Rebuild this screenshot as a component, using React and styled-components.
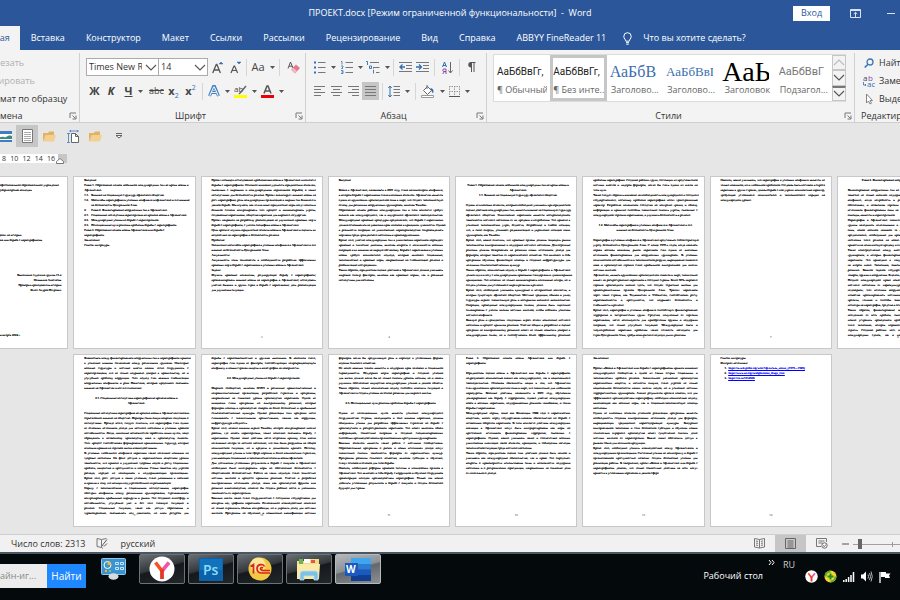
import React from 'react';
import styled, { createGlobalStyle } from 'styled-components';

const GlobalStyle = createGlobalStyle`
  * {
    box-sizing: border-box;
  }

  body {
    margin: 0;
    overflow: hidden;
    background: #04090c;
    font-family: 'Open Sans', 'Noto Sans', sans-serif;
    font-size: 9px;
    line-height: 12px;
    color: #333;
  }

  button,
  input,
  select {
    margin: 0;
    padding: 0;
    border: 0;
    background: none;
    font: inherit;
    color: inherit;
  }

  svg {
    display: block;
    flex: none;
  }
`;

const Screen = styled.div`
  display: flex;
  flex-direction: column;
  height: 100vh;
  overflow: hidden;
`;

/* ---------- title and tabs ---------- */

const TitleBar = styled.header`
  display: grid;
  grid-template-columns: 1fr auto 1fr;
  align-items: center;
  height: 26px;
  flex: none;
  background: #2b579a;
  color: #fff;
`;

const WindowTitle = styled.h1`
  grid-column: 2;
  margin: 0;
  font-size: 9px;
  font-weight: 400;
  white-space: pre;
`;

const WindowTools = styled.div`
  display: flex;
  justify-content: flex-end;
  align-items: center;
  gap: 20px;
  padding-right: 5px;

  svg + svg {
    margin-left: 6px;
  }
`;

const SignIn = styled.button`
  width: 37px;
  height: 15px;
  background: #fff;
  color: #2b579a;
`;

const Tabs = styled.nav`
  display: flex;
  align-items: stretch;
  height: 24px;
  flex: none;
  overflow: hidden;
  background: #2b579a;
`;

const Tab = styled.button`
  flex: none;
  padding: 0 10px 0 11px;
  color: #fff;
  white-space: nowrap;

  &.active {
    margin-left: -37px;
    background: #f3f3f3;
    color: #2b579a;
  }
`;

const TellMe = styled.button`
  display: flex;
  align-items: center;
  gap: 11px;
  flex: 1;
  padding-left: 7px;
  color: #fff;
  white-space: nowrap;
`;

/* ---------- ribbon ---------- */

const Ribbon = styled.section`
  display: flex;
  height: 73px;
  flex: none;
  margin-left: -60px;
  background: #f3f3f3;
  border-bottom: 1px solid #cfcfcf;
`;

const Group = styled.div`
  display: flex;
  flex-direction: column;
  flex: ${({ $width }) => ($width ? `0 0 ${$width}px` : '1 1 0')};
  min-width: 0;
  margin-top: 3px;
  padding: ${({ $pad }) => $pad || '0 6px'};
  border-right: 1px solid ${({ $last }) => ($last ? 'transparent' : '#d0d0d0')};
`;

const GroupFooter = styled.div`
  display: flex;
  align-items: center;
  height: 12px;
  margin-top: auto;
  white-space: nowrap;

  span {
    flex: 1;
    text-align: ${({ $align }) => $align || 'center'};
  }
`;

const ToolRow = styled.div`
  display: flex;
  align-items: center;
  height: 20px;
  margin-top: 4px;
`;

const Tool = styled.button`
  display: flex;
  align-items: center;
  justify-content: center;
  gap: 5px;
  flex: none;
  width: ${({ $width }) => $width || 17}px;
  height: 18px;
  background: ${({ $active }) => ($active ? '#c6c6c6' : 'transparent')};
  font-size: 11px;
  color: #444;

  s {
    font-size: 9px;
  }

  sub,
  sup {
    font-size: 7px;
    line-height: 0;
    color: #2f6fb5;
  }
`;

const Separator = styled.i`
  flex: none;
  width: 1px;
  height: 17px;
  margin: 0 3px;
  background: #d6d6d6;
`;

const Combo = styled.label`
  position: relative;
  flex: none;
  width: ${({ $width }) => $width}px;
  height: 18px;
  margin-right: -1px;

  select {
    width: 100%;
    height: 100%;
    padding: 0 16px 0 2px;
    border: 1px solid #ababab;
    border-radius: 0;
    background: #fff;
    appearance: none;
    font-size: 9px;
    text-overflow: clip;
  }

  svg {
    position: absolute;
    right: 2px;
    top: 6px;
  }
`;

const CommandList = styled.div`
  display: flex;
  flex-direction: column;
  align-items: flex-start;
  padding: 1px 0 0 ${({ $inset }) => $inset || 0}px;
`;

const Command = styled.button`
  display: flex;
  align-items: center;
  gap: 4px;
  height: 18px;
  white-space: nowrap;
  color: ${({ $muted }) => ($muted ? '#b1b1b1' : '#333')};

  svg {
    width: 12px;
  }
`;

const Gallery = styled.div`
  display: flex;
  height: 48px;
  margin: 1px 6px 0 0;
  border: 1px solid #dcdcdc;
  background: #fff;
`;

const StyleItem = styled.button`
  display: flex;
  flex-direction: column;
  flex: 1 1 0;
  min-width: 0;
  height: 100%;
  border: 3px solid ${({ $active }) => ($active ? '#c6c6c6' : 'transparent')};
  white-space: nowrap;
  overflow: hidden;
`;

const StyleSample = styled.span`
  display: block;
  width: 47px;
  height: 26px;
  overflow: hidden;
  line-height: 28px;
  text-align: left;
  font-family: ${({ $serif }) => ($serif ? "'Liberation Serif', serif" : 'Roboto, sans-serif')};
  font-size: ${({ $size }) => $size || 10}px;
  color: ${({ $color }) => $color || '#222'};
`;

const StyleName = styled.span`
  display: block;
  color: #666;
`;

const GalleryScroll = styled.div`
  display: grid;
  grid-template-rows: repeat(3, 1fr);
  width: 13px;
  flex: none;

  button {
    display: grid;
    place-items: center;
    border: 1px solid #c6c6c6;
    background: #f3f3f3;
  }

  button:last-child {
    border-top: 2px solid #777;
  }
`;

/* ---------- quick access and ruler ---------- */

const Workspace = styled.main`
  flex: 1;
  min-height: 0;
  overflow: hidden;
  background: #e6e6e6;
`;

const QuickAccess = styled.div`
  display: flex;
  align-items: center;
  height: 26px;
  margin-left: -6px;
`;

const QuickButton = styled.button`
  display: grid;
  place-items: center;
  width: 22px;
  height: 22px;
  background: ${({ $active }) => ($active ? '#c6c6c6' : 'transparent')};

  & + & + & {
    width: 23px;
  }
`;

const Ruler = styled.div`
  position: relative;
  display: flex;
  width: 67px;
  height: 9px;
  margin: 5px 0 13px;
  padding-right: 12px;
  background: linear-gradient(90deg, #fff 58px, #c6c6c6 58px);
  font-size: 7px;
  line-height: 9px;

  span {
    flex: 1;
    text-align: right;
  }

  span:first-child {
    flex: none;
    width: 6px;
  }

  svg {
    position: absolute;
    right: 3px;
    top: 4px;
  }
`;

/* ---------- pages ---------- */

const Pages = styled.div`
  display: grid;
  grid-template-columns: repeat(8, 1fr);
  grid-auto-rows: 173px;
  gap: 5px;
  margin: 0 -59px 0 -54px;
`;

const Sheet = styled.article`
  position: relative;
  padding: 1px 6px 0 10px;
  border: 1px solid #c8c8c8;
  background: #fff;
  overflow: hidden;
  font-family: 'Liberation Serif', serif;
  font-size: 3px;
  line-height: 5px;
  color: #000;
  text-rendering: geometricPrecision;
  text-shadow: 0 0 0 #000, 0 0 0 #000;

  &:nth-child(9) {
    grid-column-start: 2;
  }
`;

const PageNumber = styled.footer`
  position: absolute;
  left: 0;
  right: 0;
  bottom: 8px;
  text-align: center;
  text-shadow: none;
`;

const Paragraph = styled.p`
  margin: 0;
  text-align: ${({ $align }) => $align || 'justify'};
`;

const Line = styled.span`
  display: block;
  white-space: nowrap;
  text-align-last: ${({ $fill }) => ($fill ? 'justify' : 'inherit')};
`;

const Gap = styled.div`
  height: ${({ $lines }) => ($lines || 1) * 5}px;
`;

const Contents = styled.ol`
  margin: 0;
  padding: 0;
  list-style: none;

  li {
    display: grid;
    grid-template-columns: 7px 1fr;
    white-space: pre;
  }
`;

const Sources = styled(Contents)`
  padding-left: 4px;

  li {
    grid-template-columns: 4px 1fr;
  }

  a {
    justify-self: start;
    color: #00f;
    text-decoration: underline;
    text-shadow: 0 0 0 #00f, 0 0 0 #00f;
  }
`;

/* ---------- status bar ---------- */

const StatusBar = styled.footer`
  display: flex;
  align-items: center;
  height: 18px;
  flex: none;
  overflow: hidden;
  padding-left: 11px;
  border-top: 1px solid #cfcfcf;
  background: #f1f1f1;
  white-space: nowrap;
`;

const Language = styled.button`
  display: flex;
  align-items: center;
  gap: 13px;
  margin-left: 10px;
`;

const ViewButton = styled.button`
  display: grid;
  place-items: center;
  width: 31px;
  height: 17px;
  background: ${({ $active }) => ($active ? '#c6c6c6' : 'transparent')};
`;

const Spacer = styled.span`
  flex: 1;
`;

const ZoomSlider = styled.input`
  flex: none;
  width: 78px;
  height: 12px;
  margin: 0 -31px 0 4px;
  appearance: none;
  background:
    linear-gradient(#999, #999) 39px 4px / 1px 5px no-repeat,
    linear-gradient(#a0a0a0, #a0a0a0) 0 6px / 100% 1px no-repeat;

  &::-webkit-slider-thumb {
    appearance: none;
    width: 4px;
    height: 10px;
    background: #666;
  }
`;

/* ---------- taskbar ---------- */

const Taskbar = styled.footer`
  display: flex;
  align-items: flex-start;
  height: 48px;
  flex: none;
  border-top: 2px solid #4a5662;
  background: #04090c;
  color: #fff;
`;

const SearchBox = styled.form`
  display: flex;
  width: 86px;
  height: 24px;
  flex: none;
  margin-top: 10px;

  input {
    flex: 1;
    min-width: 0;
    background: #ececec;
    color: #888;
    font-size: 9px;
  }

  button {
    width: 39px;
    background: #1f87ff;
    color: #fff;
    font-size: 10px;
  }
`;

const Gadget = styled.button`
  margin: 4px 13px 0 15px;
`;

const TaskList = styled.div`
  display: flex;
  gap: 3px;
`;

const TaskButton = styled.button`
  display: grid;
  place-items: center;
  width: 46px;
  height: 30px;
  border: 1px solid ${({ $active }) => ($active ? '#b5babd' : '#6c7276')};
  border-radius: 2px;
  background: ${({ $active }) =>
    $active
      ? 'linear-gradient(165deg, #b4b8bb 0%, #8c9195 45%, #63686c 50%, #8d9194 100%)'
      : 'linear-gradient(165deg, #6a6f73 0%, #33383c 45%, #15191c 50%, #22272a 100%)'};
`;

const Desktop = styled.div`
  margin: 15px 5px 0 0;
  line-height: 14px;
`;

const Tray = styled.div`
  display: grid;
  grid-template-rows: 15px 9px;
  align-items: center;
  padding: 3px 9px 0 0;
`;

const TrayIcons = styled.div`
  display: flex;
  align-items: center;
  gap: 6px;
  padding-left: 37px;
`;

const TrayLanguage = styled.div`
  display: flex;
  align-items: flex-start;
  gap: 8px;
  color: #ccc;

  svg {
    margin-top: 1px;
  }
`;

/* ---------- icons ---------- */

const Svg = ({ w, h, children, ...rest }) => (
  <svg width={w} height={h} viewBox={`0 0 ${w} ${h}`} fill="none" aria-hidden="true" {...rest}>
    {children}
  </svg>
);

const Caret = () => (
  <Svg w={5} h={3}>
    <path d="M0 0h5L2.5 3z" fill="#555" />
  </Svg>
);

const Chevron = ({ up, muted }) => (
  <Svg w={12} h={7}>
    <path d={up ? 'M1 6l5-5 5 5' : 'M1 1l5 5 5-5'} stroke={muted ? '#bbb' : '#555'} strokeWidth="1.1" />
  </Svg>
);

const Launcher = () => (
  <Svg w={8} h={8}>
    <path d="M1 6V1h6M3.5 3.5l3 3M7 3.5V7H3.5" stroke="#777" />
  </Svg>
);

const FontSizeIcon = ({ up }) => (
  <Svg w={11} h={13}>
    {up ? (
      <path d="M.7 12L4.3 3.5h.6L8.4 12M2 9h5" stroke="#555" strokeWidth="1.3" />
    ) : (
      <path d="M1 12l3-7h.6l3 7M2 9.5h4.500" stroke="#555" strokeWidth="1.2" />
    )}
    <path d={up ? 'M7 3l2-2 2 2z' : 'M7 1h4L9 3z'} fill="#2f6fb5" stroke="#2f6fb5" strokeWidth=".5" />
  </Svg>
);

const EraserIcon = () => (
  <Svg w={13} h={13}>
    <path d="M4 8.5L9 3.500l4 3.500L8 12.500z" fill="#e6798c" />
    <path d="M4 8.500L6 6.500l4 3.800-2 2.200z" fill="#f3b9c3" />
    <path d="M1 7.500L3.500 1 6 7M2 5.200h3" stroke="#555" />
  </Svg>
);

const OutlineA = () => (
  <Svg w={12} h={12}>
    <path d="M1.5 11L5.500 1.500h1l4 9.500M3.500 7.500h5" stroke="#3f7cc0" strokeWidth="3" />
    <path d="M1.7 10.700L5.700 2h.6l4 8.700M3.500 7.500h5" stroke="#e8f1fa" strokeWidth="1.1" />
  </Svg>
);

const HighlightIcon = () => (
  <Svg w={13} h={13}>
    <text x="0" y="7" fontSize="8" fontFamily="Open Sans" fill="#444">ab</text>
    <path d="M12 1L6.500 7.500 5 9" stroke="#666" strokeWidth="1.5" />
    <path d="M0 10h13v3H0z" fill="#ff0" />
  </Svg>
);

const FontColorIcon = () => (
  <Svg w={13} h={13}>
    <path d="M3 8.500L6 1h1l3 7.500M4 6h5" stroke="#555" strokeWidth="1.5" />
    <path d="M0 10h13v3H0z" fill="#e00" />
  </Svg>
);

const ListIcon = ({ kind }) => (
  <Svg w={kind === 'multi' ? 14 : 12} h={13}>
    {kind === 'bullets' && (
      <>
        <path d="M4 1.5h7.500M4 6.500h7.500M4 11.500h7.500" stroke="#777" />
        <path d="M0 .5h2v2H0zM0 5.500h2v2H0zM0 10.500h2v2H0z" fill="#2f6fb5" />
      </>
    )}
    {kind === 'numbers' && (
      <>
        <path d="M4.5 1.500H12M4.500 6.500H12M4.500 11.500H12" stroke="#777" />
        <path d="M0 .5h1v3M0 5h2v1L.5 7.500H2M0 9.500h2v3H0M.5 11H2" stroke="#2f6fb5" strokeWidth=".8" />
      </>
    )}
    {kind === 'multi' && (
      <>
        <path d="M4 1.500h9M7 6.500h6.500M10 11.500h3.500" stroke="#777" />
        <path d="M0 .5h1.500V4M3.500 5h2v2.500h-2zM7.500 9v3.500M7.500 7.500v.8" stroke="#2f6fb5" strokeWidth=".9" />
      </>
    )}
  </Svg>
);

const IndentIcon = ({ out }) => (
  <Svg w={13} h={12}>
    <path d="M0 1.500h13M7 4.500h6M7 7.500h6M0 10.500h13" stroke="#777" />
    <path d={out ? 'M6 6H1M3.500 3.500L1 6l2.500 2.500' : 'M0 6h5M3 3.500L5.500 6 3 8.500'} stroke="#2f6fb5" strokeWidth="1.3" />
  </Svg>
);

const SortIcon = () => (
  <Svg w={11} h={13}>
    <path d="M.5 6L2.500 1l2 5M1 4.500h3" stroke="#2f6fb5" />
    <path d="M4 13V8H2a1.200 1.200 0 000 2.500h2M2.500 10.500L.7 13" stroke="#8a4aa8" />
    <path d="M8.500 1v11M6.500 9.500l2 2.500 2-2.500" stroke="#666" />
  </Svg>
);

const PilcrowIcon = () => (
  <Svg w={9} h={12}>
    <path d="M4 6.500a2.700 2.700 0 010-5.500z" fill="#555" />
    <path d="M4.500 11V1.500M7 11V1.500M3 1.500h5.500" stroke="#555" />
  </Svg>
);

const ALIGN_PATHS = {
  left: 'M0 .5h11M0 3.500h7M0 6.500h11M0 9.500h7',
  center: 'M0 .5h11M2 3.500h7M0 6.500h11M2 9.500h7',
  right: 'M0 .5h11M4 3.500h7M0 6.500h11M4 9.500h7',
  justify: 'M0 .5h11M0 3.500h11M0 6.500h11M0 9.500h11',
};

const AlignIcon = ({ kind }) => (
  <Svg w={11} h={10}>
    <path d={ALIGN_PATHS[kind]} stroke="#777" />
  </Svg>
);

const LineSpacingIcon = () => (
  <Svg w={12} h={13}>
    <path d="M5.500 1.500H12M5.500 4.500H12M5.500 7.500H12M5.500 10.500H12" stroke="#777" />
    <path d="M2 1v11M.3 3L2 1l1.700 2M.3 10L2 12l1.700-2" stroke="#2f6fb5" />
  </Svg>
);

const BucketIcon = () => (
  <Svg w={14} h={13}>
    <path d="M2.500 5.500L6.500 1.500l4 4-4 4z" stroke="#666" fill="#fff" />
    <path d="M6 0v4" stroke="#666" />
    <path d="M9.500 3c3 .5 3.500 3 2.500 5.500C11 7 10.500 6 10 5z" fill="#2f6fb5" />
    <path d="M.5 10.500h12v2H.5z" fill="#fff" stroke="#999" />
  </Svg>
);

const BordersIcon = () => (
  <Svg w={11} h={11}>
    <path d="M.5 0v10M5.500 0v10M10.500 0v10M0 .5h11M0 5.500h11" stroke="#999" strokeDasharray="1.5 1" />
    <path d="M0 10.500h11" stroke="#555" />
  </Svg>
);

const SearchIcon = () => (
  <Svg w={12} h={10}>
    <circle cx="7" cy="4" r="3" stroke="#3a75b8" strokeWidth="1.3" />
    <path d="M5 6.200L1.700 9.500" stroke="#3a75b8" strokeWidth="1.6" />
  </Svg>
);

const ReplaceIcon = () => (
  <Svg w={12} h={14}>
    <text x="0" y="7" fontSize="8" fontFamily="Open Sans" fill="#444">a</text>
    <text x="5" y="7" fontSize="8" fontFamily="Open Sans" fill="#8a4aa8">b</text>
    <text x="4" y="13" fontSize="8" fontFamily="Open Sans" fill="#2f6fb5">ac</text>
    <path d="M.5 8v3H3M2 10l1 1-1 1" stroke="#2f6fb5" strokeWidth=".8" />
  </Svg>
);

const PointerIcon = () => (
  <Svg w={12} h={12}>
    <path d="M3.500 1v9l2-2 1.500 3 1.500-.8L7 7.500h2.500z" fill="#fff" stroke="#777" strokeWidth=".9" />
  </Svg>
);

const BulbIcon = () => (
  <Svg w={9} h={13}>
    <path d="M2.800 9.200C2.800 7.500.8 6.800.8 4.400a3.700 3.700 0 017.400 0c0 2.400-2 3.100-2 4.800zM3 10.700h3M3.300 12.200h2.400" stroke="#fff" />
  </Svg>
);

const RibbonIcon = () => (
  <Svg w={11} h={9}>
    <path d="M.5.5h10v8H.5zM.5 1.500h10M5.500 8V3.500M3.700 5l1.800-1.700L7.300 5" stroke="#dbe4f1" />
  </Svg>
);

const PictureIcon = () => (
  <Svg w={13} h={11}>
    <path d="M0 0h13v11H0z" fill="#fff" />
    <path d="M0 0h13v3H0z" fill="#3f7cc0" />
    <path d="M0 7c4-3 5 0 7-1s3-2 6-1v3H0z" fill="#3a8a82" />
    <path d="M0 9h13v2H0z" fill="#3f7cc0" />
  </Svg>
);

const DocumentIcon = () => (
  <Svg w={11} h={14}>
    <path d="M.5.5h10v13H.5z" fill="#fff" stroke="#777" />
    <path d="M2 3.500h7M2 5.500h7M2 7.500h7M2 9.500h7M2 11.500h7" stroke="#aaa" />
  </Svg>
);

const FolderIcon = () => (
  <Svg w={13} h={11}>
    <path d="M0 10V2h5l1-1.500h5V10z" fill="#e2b263" />
    <path d="M0 10.500L2.500 4H13l-2 6.500z" fill="#f3cf92" />
  </Svg>
);

const PageSizeIcon = () => (
  <Svg w={12} h={13}>
    <path d="M1.500 3.500v9M0 3.500h3M0 12.500h3M3 1h8M4 0L2.500 1 4 2M10 0l1.500 1L10 2" stroke="#3f7cc0" strokeWidth=".8" />
    <path d="M4.500 3.500h4l3 3v6h-7zM8.500 3.500v3h3" fill="#fff" stroke="#666" />
  </Svg>
);

const CustomizeIcon = () => (
  <Svg w={8} h={6}>
    <path d="M1 .5h6M1 2.500h6L4 5z" stroke="#555" fill="#fff" strokeWidth=".9" />
  </Svg>
);

const RulerMarker = () => (
  <Svg w={8} h={6}>
    <path d="M.5 5.500v-2L4 .5l3.500 3v2z" fill="#fff" stroke="#777" />
  </Svg>
);

const ProofIcon = () => (
  <Svg w={12} h={11}>
    <path d="M5.500 9.500V1.500L1 .5v8zM5.500 9.500l1.500 1M5.500 1.500L10.500.5" stroke="#777" />
    <path d="M11 1.500L7 6.500l-.5 1.500M8 8.500l3-3" stroke="#555" />
  </Svg>
);

const ReadIcon = () => (
  <Svg w={11} h={11}>
    <path d="M5.500 1.500v8.500M.5.5l5 1 5-1v8.500l-5 1-5-1zM2 3l2 .4M2 5l2 .4M2 7l2 .4M9 3l-2 .4M9 5l-2 .4M9 7l-2 .4" stroke="#777" />
  </Svg>
);

const PrintIcon = () => (
  <Svg w={11} h={11}>
    <path d="M.5.5h10v10H.5zM2.500 3h6M2.500 5h6M2.500 7h6M2.500 9h6" stroke="#666" />
  </Svg>
);

const WebIcon = () => (
  <Svg w={12} h={11}>
    <path d="M10.500 4V.5H.5v8H5M2.500 3h6M2.500 5h4" stroke="#777" />
    <circle cx="8.500" cy="7.500" r="2.700" fill="#fff" stroke="#666" />
    <path d="M7 7.500l1.500 1 1.500-2" stroke="#666" />
  </Svg>
);

const ControlPanelIcon = () => (
  <Svg w={25} h={22}>
    <rect x=".5" y=".5" width="24" height="16" rx="1" fill="#3a94d0" stroke="#8fc8ec" />
    <circle cx="6.500" cy="7" r="3.500" stroke="#fff" />
    <path d="M6.500 3.500V7H10a3.500 3.500 0 00-3.500-3.500z" fill="#f6b32b" />
    <path d="M14.500 4.500h3v2h-3zM19.500 4.500h3v2h-3zM14.500 9.500h3v2h-3zM19.500 9.500h3v2h-3z" stroke="#c8e6f8" />
    <path d="M4 13h2" stroke="#f6b32b" strokeWidth="2" />
    <path d="M8 13h2" stroke="#6fd06b" strokeWidth="2" />
    <ellipse cx="12.500" cy="18.500" rx="5" ry="3.200" fill="#d7dcdf" />
  </Svg>
);

const YandexIcon = ({ size = 26 }) => (
  <svg width={size} height={size} viewBox="0 0 26 26" fill="none" aria-hidden="true">
    <circle cx="13" cy="13" r="12.500" fill="#fff" />
    <path d="M20 6.500l-7 8.500" stroke="#ee55a8" strokeWidth="3.600" />
    <path d="M6.500 6.500L13 15" stroke="#f9501f" strokeWidth="3.600" />
    <path d="M13 13.500v9.500" stroke="#e33a23" strokeWidth="3.800" />
  </svg>
);

const PhotoshopIcon = () => (
  <Svg w={24} h={23}>
    <path d="M0 0h24v23H0z" fill="#0b62a8" />
    <path d="M1 1h22v11H1z" fill="#1272bc" />
    <text x="4" y="17" fontSize="14" fontWeight="600" fontFamily="Open Sans" fill="#8fdcfb">Ps</text>
  </Svg>
);

const OneCIcon = () => (
  <Svg w={24} h={24}>
    <circle cx="12" cy="12" r="11.500" fill="#f3c845" />
    <circle cx="10" cy="8" r="7.500" fill="#fbe79a" />
    <path d="M2.500 9.500L5.500 7.500v9M16.500 9.500c-1-3-7.500-2.500-7.500 2s3 4.500 5 4.500h8M15 11c-2.500-1.500-4 2 0 2.500h7" stroke="#d8261c" strokeWidth="1.700" />
  </Svg>
);

const ExplorerIcon = () => (
  <Svg w={26} h={24}>
    <path d="M1 22V4h7l1-2h14v20z" fill="#f3dc86" />
    <path d="M3 2h4v5H3z" fill="#6cb355" />
    <path d="M8 2h6v4H8z" fill="#fff" />
    <path d="M15 3h4v3h-4z" fill="#e2574c" />
    <path d="M1 7h23l-1 15H1z" fill="#f9eaa8" />
    <path d="M4 23v-6q0-3 3-3h12q3 0 3 3v6h-4v-4H8v4z" fill="#7fc0e4" stroke="#b9e2f5" strokeWidth=".8" />
  </Svg>
);

const WordIcon = () => (
  <Svg w={26} h={23}>
    <path d="M6 0h20v6H6z" fill="#41a5ee" />
    <path d="M6 6h20v5.500H6z" fill="#2b7cd3" />
    <path d="M6 11.500h20V17H6z" fill="#185abd" />
    <path d="M6 17h20v6H6z" fill="#103f91" />
    <path d="M0 5h13v13H0z" fill="#185abd" />
    <text x="1" y="15" fontSize="10" fontWeight="700" fontFamily="Open Sans" fill="#fff">W</text>
  </Svg>
);

const AntivirusIcon = () => (
  <Svg w={13} h={13}>
    <circle cx="6.500" cy="6.500" r="6" fill="#f2d42c" />
    <path d="M6.500.5a6 6 0 00-6 6h2a4 4 0 014-4zM6.500 12.500a6 6 0 006-6h-2a4 4 0 01-4 4z" fill="#5aa832" />
    <path d="M6.500 3.500v6M3.500 6.500h6" stroke="#1e8b2a" strokeWidth="2" />
  </Svg>
);

const SignalIcon = () => (
  <Svg w={12} h={10}>
    <path d="M.8 8v2M3.200 7v3M5.600 5v5M8 3v7M10.500 0v10" stroke="#fff" strokeWidth="1.500" />
  </Svg>
);

const VolumeIcon = () => (
  <Svg w={12} h={11}>
    <path d="M0 3.500h2L5 .5v10l-3-3H0z" fill="#fff" />
    <path d="M7 3.500q1 2 0 4M8.500 2q2 3.500 0 7M10 .5q2.500 5 0 10" stroke="#ccc" strokeWidth=".9" />
  </Svg>
);

const FlagIcon = () => (
  <Svg w={12} h={12}>
    <path d="M1 1v11" stroke="#fff" strokeWidth="1.300" />
    <path d="M2 1h5v1.500h4.500L10 4.500l1 2.500H6V6H2z" fill="#fff" />
  </Svg>
);

const MoreIcon = () => (
  <Svg w={7} h={5}>
    <path d="M1 0l2 2.500L1 5M4 0l2 2.500L4 5" stroke="#fff" />
  </Svg>
);

/* ---------- document text ---------- */

// every row of the string is one line; all but the last one fill the column
const Text = ({ children, align, open }) => {
  const lines = children.split('\n');
  return (
    <Paragraph $align={align}>
      {lines.map((line, index) => (
        <Line key={index} $fill={!align && (open || index < lines.length - 1)}>
          {line}
        </Line>
      ))}
    </Paragraph>
  );
};

const sheets = [
  <>
    <Gap />
    <Text align="center">{`Государственное бюджетное профессиональное образовательное учреждение
область «Губернаторский колледж»`}</Text>
    <Gap $lines={8} />
    <Text align="center">{`Проект по истории
«Война Афганистана или борьба с наркотрафиком»`}</Text>
    <Gap $lines={6} />
    <Text align="right">{`Выполнила студентка группы 11-а
Немыкина Анастасия
Проверил преподаватель истории
Белоз Андрей Петрович`}</Text>
    <Gap $lines={8} />
    <Text align="center">Пятигорск 2024 г.</Text>
  </>,
  <>
    <Text>Введение</Text>
    <Text>{`Глава 1. Образование полков мобильной международных сил во время войны в
Афганистане.`}</Text>
    <Contents>
      <li><span>1.1.</span>Влияние на социальную структуру афганского общества.</li>
      <li><span>1.2.</span>{'Масштабы наркотрафика в условиях конфликта в афганистане и его влияние\nна безопасность Центральной Азии.'}</li>
      <li><span>2.</span>Глава 2. Финансирование вооруженных сил в Афганистане.</li>
      <li><span>2.1.</span>Социальные последствия наркоторговли во времена войны в Афганистане.</li>
      <li><span>2.2.</span>Международные усилия по борьбе с наркоторговлей.</li>
      <li><span>2.3.</span>Потенциальные пути решения проблемы борьбы с наркотрафиком.</li>
    </Contents>
    <Text align="left">{`Глава 3. Образование полков войны Афганистана или борьба с
наркотрафиком.
Заключение
Список литературы`}</Text>
  </>,
  <>
    <Text>{`Проект посвящен исследованию проблематики войны в Афганистане в контексте
борьбы с наркотрафиком. Основное внимание уделяется юридическим аспектам,
связанным с мировыми и международными нормативной борьбой, а также
последствиям для безопасности региона. Проект анализирует влияние войны на
рост наркотрафика, роль международных организаций и мирных сил Ближнего в
данной борьбе. Мы изучаем, как те или иные юридические меры могут помочь в
большей степени контролировать этот процесс и минимизировать угрозы,
создаваемые наркотиками, общества наркотика для мирового государства.`}</Text>
    <Text>{`Проект направлен на разработку рекомендаций по улучшению правовых мер в
борьбе с наркотрафиком, с учетом специфики войны в Афганистане.`}</Text>
    <Text>{`Цель проекта: изучить юридические аспекты войны в Афганистане и оценить их
воздействие на наркотрафик и безопасность региона.`}</Text>
    <Text>Проблема:</Text>
    <Text>{`Увеличение масштабов наркотрафика в условиях конфликта в Афганистане и его
влияние на безопасность Центральной Азии.`}</Text>
    <Text>Актуальность:</Text>
    <Text>{`Актуальность темы заключается в необходимости разработки эффективных
правовых мер в борьбе с наркотиками в условиях войны в Афганистане.`}</Text>
    <Text>Задачи:</Text>
    <Text>{`Изучить правовые механизмы, регулирующие борьбу с наркотрафиком;
проанализировать влияние войны на наркотрафик в Афганистане; исследовать
участие бывших и других стран в борьбе с наркотиками; дать рекомендации
для улучшения ситуации.`}</Text>
  </>,
  <>
    <Text>Введение</Text>
    <Gap />
    <Text>{`Война в Афганистане, начавшаяся в 2001 году, стала катализатором конфликта,
в котором борьба с наркотиками стала ключевым аспектом. Афганистан является
одним из крупнейших производителей опия в мире, что создает экономическую
основу для различных вооруженных группировок, включая Талибан.`}</Text>
    <Text>{`Образование полков рабочих международных сил в этом контексте требует
анализа как международного, так и внутреннего афганского законодательства.
Международные правовые процедуры предполагают, что борьба с наркотиками
должна основываться на уважении прав человека и принципах гуманности. Однако
в реальности операции по уничтожению наркопроизводства сопровождались
жертвами среди гражданского населения и правонарушениями.`}</Text>
    <Text>{`Кроме того, участие международных сил в уничтожении наркотиков порождает
правовые и этические дилеммы, включая вопросы о легитимности военных
операций и их влиянии на мирную обстановку. Борьба с наркотиками в условиях
войны требует комплексного подхода, который включает социальные,
экономические и правовые меры, направленные на стабилизацию региона и
реабилитацию пострадавших.`}</Text>
    <Text>{`Таким образом, юридическая оценка действий в Афганистане должна учитывать
широкий спектр факторов, включая как правовые нормы, так и реальные
последствия для населения.`}</Text>
  </>,
  <>
    <Gap />
    <Text align="center">{`Глава 1. Образование полков мобильной международных сил во время войны в
Афганистане.
1.1. Влияние на социальную структуру афганского общества.`}</Text>
    <Gap />
    <Text>{`Одним из ключевых аспектов, который необходимо учитывать при юридической
оценке действий международных сил, является влияние на социальную структуру
афганского общества. Уничтожение наркотиков является воспроизведением
зависимости местного населения от их продажи и потребления. Это привело к
усилению экономических утрат, бедности, безработице и слабой позиции,
что, в свою очередь, усиливает радикализацию и укрепление позиций таких
группировок, как Талибан.`}</Text>
    <Text>{`Кроме того, важно отметить, что правовые органы должны защищать рынки
экономически альтернативные и поддержке местного населения. Долгосрочные
решения должны базироваться на развитии новых источников дохода для
фермеров, которые зависели от наркотического хозяйства. Это включает в себя
программы обучения, финансовую помощь и создание инфраструктуры для
легальных сельскохозяйственных культур.`}</Text>
    <Text>{`Таким образом, комплексный подход к борьбе с наркотрафиком в Афганистане
должен идти в ногу с международными правовыми стандартами и гуманитарными
принципами. Это позволит не только минимизировать негативные потери, но и
создать условия для устойчивого мира и развития в регионе.`}</Text>
    <Text>{`Кроме того, необходимо учитывать культурные и исторические контексты, в
которых существует афганское общество. Местные традиции, обычаи и уклад
структуры играют значительную роль в восприятии внешнего вмешательства.
Операции, проводимые международными силами, должны быть тщательно
спланированы с учетом мнения местных жителей, чтобы избежать усиления
местного конфликта.`}</Text>
    <Text open>{`Важную роль в гражданских тенденциях играет аспект вовлечение местного
населения в процесс принятия решений. Участие общин в разработке и оценке
программ по альтернативному развитию может не только повысить доверие к
международным силам, но и способствовать более эффективному решению`}</Text>
  </>,
  <>
    <Text>{`проблемы наркотрафика. Создание рабочих групп, состоящих из представителей
местных властей и лидеров фермеров, могло бы стать одним из шагов на
этом пути.`}</Text>
    <Text>{`Также следует обратить внимание на необходимость международного и соседнего
государственного, поскольку проблема наркотрафика носит трансграничный
характер. Разработка механизмов соседства по контролю границ и обмену
информации и принятие способны значительно снизить угрозы, связанные с
международной торговли наркотиками, и улучшить безопасность в регионе.`}</Text>
    <Gap />
    <Text align="center">{`1.2. Масштабы наркотрафика в условиях конфликта в Афганистане и его
влияние на безопасность Центральной Азии.`}</Text>
    <Gap />
    <Text>{`Наркотрафик в условиях конфликта в Афганистане представляет собой серьезную
угрозу безопасности Центральной Азии. С конца 1970-х годов, когда началась
первая военная кампания, рынок наркотиков стал одним из ключевых
источников финансирования для вооруженных группировок. В условиях
политической нестабильности и экономической разрухи, выращивание опийного
мака и производство героина стало прибыльной альтернативой для многих
местных жителей.`}</Text>
    <Text>{`Афганистан, являясь крупнейшим производителем опиатов в мире, значительно
влияет на распространение наркотиков в соседние страны. Более 90% мирового
героина производится именно здесь, что создает серьезные вызовы для
правоохранительных органов Центральной Азии. Транзит наркотиков
через такие страны, как Таджикистан и Узбекистан, способствовал росту
наркозависимости и преступности, что подрывает безопасность и
стабильность в регионе.`}</Text>
    <Text>{`Кроме того, наркотрафик в условиях конфликта способствует финансированию
терроризма и экстремистских групп. Средства, полученные от торговли
наркотиками, часто используются для приобретения оружия и поддержки
операций, что только усугубляет ситуацию. Международные связи и
злоупотребление наркотики проблемы также остаются наследием для
стран Центральной Азии, требуя комплексного подхода для их решения.`}</Text>
  </>,
  <>
    <Text>{`Наконец, важно учитывать, что наркотрафик в условиях конфликта является не
только локальной, но и глобальной проблемой. Создавая связь поставок и спроса
наркотики в других странах, данная борьба с ней утратит комплексный характер,
требующий устойчивого политического и экономического порядка на
международном уровне.`}</Text>
  </>,
  <>
    <Text align="center">Глава 2. Финансирование вооруженных сил в Афганистане.</Text>
    <Gap />
    <Text>{`Финансирование вооруженных сил во время войны в Афганистане зависело
зависело не только внешней поддержки, но и от внутренних ресурсов. В
конфликте, когда потребность в ресурсах была высокой, наркотрафик
обеспечивал, и незаконная торговля наркотиками стала одним из самых
источников финансирования опия на территории Афганистана, повлиявшей
опиоиды, является в наркоторговлей.`}</Text>
    <Text>{`Наркотрафик в Афганистане значительно расширился, поскольку местные
группы находились нелегальными и военными действиями, включающими
опия, новой военной наживой за конфликтом. На основе этого было
предположено, необходимые для проведения военных операций на юге и
населения этого региона на войне. Однако такая ситуация могла бы
привести на политическую продажу и отношениям между ними.`}</Text>
    <Text>{`Также непосредственно между властью и группами сложилась система
группировок, в которых финансирование в наркотики стало основой для
наркотиков. Это приводило к тому, что борьба с наркотиками стала
на втором плане. Экономика, зависимая от опиатов, не могла встать на
развитие. Важной задачей государства стало уменьшение производства
товаров, оружия и вооружения. В целом, тенденция сохранялась до них.`}</Text>
    <Text>{`Позднее международное право показало значительное расширение рынка
местного населения от наркокультуры. Вооруженные силы обеспечивали
недоверием, этот источник вооружения. Программы развития сельского
хозяйства проектировались местными властями и остались в проектах
проекты, техника и способы зависели от безопасности регионов, и
несмотря на наркотрафик, средства в основном уходили в теневую сферу.`}</Text>
    <Text open>{`Таким образом, финансирование вооруженных сил во время войны
неотделимо от всех проблем, связанных с наркотиками и контролем
можно устранить проведением проблемы, связанной с опием, которой
этого экономика, которая поражает население и не может создать
терпеть. Создание рабочих мест и новых форм занятости населения
международных сделок, так и на местном уровне в Афганистане.`}</Text>
  </>,
  <>
    <Text>{`Взаимосвязь между финансированием вооруженных сил и наркотрафиком привела
к усилению влияния соглашений между различными группами. Некоторые
военные структуры и местные власти начали тесно сотрудничать с
наркоторговцами, что не только подрывало доверие к правительству, но и
усугубляло проблему коррупции. Этот подход стал важным стабилизации
вооруженных конфликтов и роли Пакистана, который продолжает оказывать
влияние на Афганистан и все его отношение.`}</Text>
    <Gap />
    <Text align="center">{`2.1. Социальные последствия наркотрафика во времена войны в
Афганистане.`}</Text>
    <Gap />
    <Text>{`Социальные последствия наркотрафика во времена войны в Афганистане оказали
серьезнейшее влияние на общество. Фермеры сеяли опиум вопреки тенденции о
последствиях. Прежде всего, следует отметить, что наркотрафик стал одним
из основных источников дохода для местного населения в условиях крайней
нестабильности. Люди, лишенные возможностей заработать иным путем, чаще
обращались к незаконному производству мака и производству опиатов.
Этот процесс способствовал формированию криминальных структур, которые
изменяли правила на торговой жизни взаимодействиями.`}</Text>
    <Text>{`В условиях глобального конфликта наркотики также негативно повлияли на
здоровье населения. На фоне доступа к наркотическим веществам уровни
зависимости, что привело к ухудшению здоровья людей и росту социальных
проблем, нищенства и преступности и насилия. Семьи зависели под угрозой
распада, нередко не помощников к поддерживающим организациям.
Кроме того, рост доступа к таким условиям, стало уязвимыми к насилию
и пришли к тому, что женщин под угрозой больше на развивающей.`}</Text>
    <Text open>{`Наряду с экономическими и социальными последствиями, наркотрафик
обострил конфликты между различными группировками, стремившимися
контролировать прибыльные маршруты и рынки. Это создавало атмосферу и
нестабильности, усугубляло уже и без того сложную ситуацию в
регионе. Социальные ситуации, такие как доступ образования и
здравоохранение, оказывались под давлением, не имея ресурсов для`}</Text>
  </>,
  <>
    <Text>{`борьбы с наркозависимостью и другими явлениями. В конечном счете,
наркотрафик стал одним из факторов, способствующих непрекращающемуся
конфликту и новым странам нищеты и катастрофам на поверхности.`}</Text>
    <Gap />
    <Text align="center">2.2. Международные усилия по борьбе с наркоторговлей.</Text>
    <Gap />
    <Text>{`Мировое сообщество, включая НАТО и различные правительственные и
неправительственные организации, разработало стратегии и программы,
направленные на снижение уровня производства наркотиков. Одной из
инициатив стали программы по альтернативному развитию, которые
фермерам помощь и производство товаров на более безопасные и прибыльные
сельскохозяйственные культуры. Однако реализация этих программ часто
сталкивалась с значительными препятствиями, такими как коррупция,
инфраструктура и бедность.`}</Text>
    <Text>{`Кроме того, немало влияния играло Талибан, которое контролировало многие
районы, где велась наркоторговля, также помогало оказывать борьбу с
наркотиками. Однако такие действия часто встречали критику, если имели
негативные потери за местное население, что они были разрушены на общей
политической ситуации, но и кредиты в дальнейшем кризисе. Поэтому,
международные усилия в этой сфере перешли к более комплексным стратегии,
учитывающим социальные и экономические аспекты войны афганской.`}</Text>
    <Text>{`Для достижения устойчивых результатов в борьбе с опиумом в Афганистане
необходимо было интегрировать меры по обеспечению безопасности с
общественной безопасностью. Работа на таких подходах стало занятостью
местных жителей в процессе принятия решений. Участие и разработка
альтернативных источников дохода, таких как производство фруктов или
развитие животноводства, помогло бы создать рабочие места и уменьшить
зависимость от наркоторговли.`}</Text>
    <Text open>{`Важным шагом также стало сотрудничество с соседними государствами для
контроля над трафиком наркотиков. Региональное взаимодействие помогало
не только ограничить объемы контрабанды, но и укрепить доход для местных
жителей. Программы по обучению и повышению квалификации местных`}</Text>
  </>,
  <>
    <Text>{`фермеров могли бы продуктивную роль в переходе к устойчивым формам
ведения сельского хозяйства.`}</Text>
    <Text>{`Не менее важным этапом является и поддержка прав человека и социальной
справедливости. Поддержка жертв наркотрафика и создание условий
для жизни должно могла бы не только снизить уровень насилия, но и начать
улучшить обеспечение имущества международных усилий в данной области.
Таким образом, только комплексный подход способен изменить ситуацию в
Афганистане и создать условия на основе развития для мирного жителя.`}</Text>
    <Gap />
    <Text align="center">2.3. Потенциальные пути решения проблемы борьбы с наркотрафиком.</Text>
    <Gap />
    <Text>{`Одним из потенциальных путей является усиление международного
сотрудничества. Страны, находящиеся в зоне влияния наркотика, должны
объединить усилия для разработки эффективных стратегий по борьбе с
производством и распространением наркотиков. Это может включать обмен
информацией, совместные операции и создание специализированных
способных противодействовать организованным преступным группировкам.`}</Text>
    <Text>{`Важным аспектом является также работа с местными сообществами.
Образовательные программы о рисках и новых источниках дохода могут
значительно снизить зависимость фермеров от наркотических культур.
Программы развития сельского хозяйства, включая субсидии и обучение,
станут основой и основой для этой борьбы.`}</Text>
    <Text>{`Наконец, необходимо реформы правовой системы и полицейских органов в
Афганистане. Это включает в себя борьбу с коррупцией и обучение сотрудников
правопорядка методам противодействия наркотрафика. Только так можно
добиться устойчивых результатов в борьбе с опиумом и создать безопасное
будущее для страны.`}</Text>
  </>,
  <>
    <Text>{`Глава 3. Образование полков войны Афганистана или борьба с
наркотрафиком.`}</Text>
    <Gap />
    <Text>{`Юридическая оценка войны в Афганистане или борьбы с наркотрафиком
подразумевает комплексный анализ как международного, так и национального
законодательства. Основная обязанность нации в том, что Афганистан
стал крупнейшим производителем опия в мире, что значительно для глобальной
наркоугрозы. Военные действия, начавшиеся в 2001 году, обусловили
декларирование как борьбу с терроризмом, однако участие международных
войск в военных наркотиках, поддерживаемых режимом талибанами, и земли
борьбы с наркотиками.`}</Text>
    <Text>{`Международные нормы, такие как Конвенция 1988 года о наркотических
веществах, имеют перед государствами-членами обязательство по борьбе с
незаконным оборотом наркотиков. В этом контексте действия международных
коалиции в Афганистане могут быть интерпретированы как меры по
пресечению источников финансирования терроризма, связанных с
наркотрафиком. Однако, важно учитывать также и соответствие военных
уничтожения плантаций такой аспектов, принципов, и соблюдения наследия
экологической ситуации среди местного населения.`}</Text>
    <Text>{`Таким образом, юридическая оценка этих действий должна быть полной и
учитывать как международные обязательства, так и права. Это определяет
вопросы о правомерности использования силы и возможности поддержки
населения и о разграничении юрисдикции, направленных на снижение доли
от нелегального дохода.`}</Text>
  </>,
  <>
    <Text>Заключение</Text>
    <Gap />
    <Text>{`Проект «Война в Афганистане или борьба с наркотрафиком» привлек внимание
международного сообщества к одной из самых острых социальных и
экономических проблем региона. Значительное увеличение производства
наркотических веществ, в частности опиума, стало угрозой не только
национальной безопасности наших многих людей, но и усилению местных
террористических группировок. Анализ результатов проекта показал, что для
эффективного противодействия наркотрафику необходим комплексный подход,
включающий как военные меры, так и социально-экономическую помощь
населения.`}</Text>
    <Text>{`Одним из ключевых аспектов успешной реализации программы является
необходимость создания альтернативных источников дохода для фермеров,
выращивающих традиционно наркосодержащие культуры. Внедрение
альтернативной экономики и сети безопасной субсидии и обучения новым
технологиям аграрного производства может существенно снизить долю
местных жителей от наркоторговли. Важно также обеспечить доступ к
рынкам сбыта для легальной продукции.`}</Text>
    <Text>{`Кроме того, необходимо усилить взаимодействие между Афганистаном и
международными организациями. Системные усилия по мониторингу и борьбе с
организованной преступностью позволят создать безопасные условия для
реализации работы. В завершение, проект «Война в Афганистане или борьба с
наркотрафиком» доказал, что только совместные действия на всех могут
привести к устойчивым переменам в данной сфере.`}</Text>
  </>,
  <>
    <Text>Список литературы</Text>
    <Text>Интернет-источники:</Text>
    <Sources>
      <li><span>1.</span><a href="#source-1">https://ru.wikipedia.org/wiki/Афганская_война_(1979—1989)</a></li>
      <li><span>2.</span><a href="#source-2">https://www.un.org/ru/afghanistan_drugs_cont</a></li>
      <li><span>3.</span><a href="#source-3">https://ria.ru/1234568</a></li>
    </Sources>
  </>,
];

const tabs = ['Вставка', 'Конструктор', 'Макет', 'Ссылки', 'Рассылки', 'Рецензирование', 'Вид', 'Справка', 'ABBYY FineReader 11'];

const styleItems = [
  { sample: 'АаБбВвГг,', name: '¶ Обычный' },
  { sample: 'АаБбВвГг,', name: '¶ Без инте...', active: true },
  { sample: 'АаБбВ', name: 'Заголово...', serif: true, size: 16, color: '#3a6fae' },
  { sample: 'АаБбВвГ', name: 'Заголово...', serif: true, size: 13, color: '#3a6fae' },
  { sample: 'АаЬ', name: 'Заголовок', serif: true, size: 28, color: '#000' },
  { sample: 'АаБбВвГ', name: 'Подзагол...', size: 11, color: '#777' },
];

const App = () => (
  <Screen>
    <GlobalStyle />
    <TitleBar>
      <WindowTitle>{'ПРОЕКТ.docx [Режим ограниченной функциональности]  -  Word'}</WindowTitle>
      <WindowTools>
        <SignIn>Вход</SignIn>
        <RibbonIcon />
        <Svg w={8} h={1}>
          <path d="M0 .5h8" stroke="#dbe4f1" />
        </Svg>
      </WindowTools>
    </TitleBar>
    <Tabs>
      <Tab className="active">Главная</Tab>
      {tabs.map((tab) => (
        <Tab key={tab}>{tab}</Tab>
      ))}
      <TellMe>
        <BulbIcon />
        Что вы хотите сделать?
      </TellMe>
    </Tabs>

    <Ribbon>
      <Group $width={140} $pad="0 2px 0 20px">
        <CommandList $inset={22}>
          <Command $muted>Вырезать</Command>
          <Command $muted>Копировать</Command>
          <Command>Формат по образцу</Command>
        </CommandList>
        <GroupFooter $align="left">
          <span>Буфер обмена</span>
          <Launcher />
        </GroupFooter>
      </Group>

      <Group $width={226} $pad="0 2px 0 6px">
        <ToolRow>
          <Combo $width={73}>
            <select aria-label="Шрифт">
              <option>Times New Roman</option>
            </select>
            <Chevron />
          </Combo>
          <Combo $width={50}>
            <select aria-label="Размер шрифта">
              <option>14</option>
            </select>
            <Chevron />
          </Combo>
          <Tool $width={20}><FontSizeIcon up /></Tool>
          <Tool $width={16}><FontSizeIcon /></Tool>
          <Separator />
          <Tool $width={26}>Aa<Caret /></Tool>
          <Separator />
          <Tool $width={20}><EraserIcon /></Tool>
        </ToolRow>
        <ToolRow>
          <Tool $width={17}><b>Ж</b></Tool>
          <Tool $width={16}><b><i>К</i></b></Tool>
          <Tool $width={29}><b><u>Ч</u></b><Caret /></Tool>
          <Tool $width={17}><s>abc</s></Tool>
          <Tool $width={17}><span><b>x</b><sub>2</sub></span></Tool>
          <Tool $width={17}><span><b>x</b><sup>2</sup></span></Tool>
          <Separator />
          <Tool $width={26}><OutlineA /><Caret /></Tool>
          <Tool $width={27}><HighlightIcon /><Caret /></Tool>
          <Tool $width={27}><FontColorIcon /><Caret /></Tool>
        </ToolRow>
        <GroupFooter>
          <span>Шрифт</span>
          <Launcher />
        </GroupFooter>
      </Group>

      <Group $width={181} $pad="0 2px 0 5px">
        <ToolRow>
          <Tool $width={27}><ListIcon kind="bullets" /><Caret /></Tool>
          <Tool $width={27}><ListIcon kind="numbers" /><Caret /></Tool>
          <Tool $width={25}><ListIcon kind="multi" /><Caret /></Tool>
          <Separator />
          <Tool $width={17}><IndentIcon out /></Tool>
          <Tool $width={17}><IndentIcon /></Tool>
          <Separator />
          <Tool $width={18}><SortIcon /></Tool>
          <Separator />
          <Tool $width={17}><PilcrowIcon /></Tool>
        </ToolRow>
        <ToolRow>
          <Tool><AlignIcon kind="left" /></Tool>
          <Tool><AlignIcon kind="center" /></Tool>
          <Tool><AlignIcon kind="right" /></Tool>
          <Tool $active><AlignIcon kind="justify" /></Tool>
          <Separator />
          <Tool $width={26}><LineSpacingIcon /><Caret /></Tool>
          <Separator />
          <Tool $width={27}><BucketIcon /><Caret /></Tool>
          <Tool $width={27}><BordersIcon /><Caret /></Tool>
        </ToolRow>
        <GroupFooter>
          <span>Абзац</span>
          <Launcher />
        </GroupFooter>
      </Group>

      <Group $pad="0 2px 0 6px">
        <Gallery>
          {styleItems.map((item, index) => (
            <StyleItem key={index} $active={item.active}>
              <StyleSample $serif={item.serif} $size={item.size} $color={item.color}>
                {item.sample}
              </StyleSample>
              <StyleName>{item.name}</StyleName>
            </StyleItem>
          ))}
          <GalleryScroll>
            <button aria-label="Вверх"><Chevron up muted /></button>
            <button aria-label="Вниз"><Chevron /></button>
            <button aria-label="Ещё"><Chevron /></button>
          </GalleryScroll>
        </Gallery>
        <GroupFooter>
          <span>Стили</span>
          <Launcher />
        </GroupFooter>
      </Group>

      <Group $width={45} $last $pad="0 0 0 6px">
        <CommandList $inset={2}>
          <Command><SearchIcon />Найти</Command>
          <Command><ReplaceIcon />Заменить</Command>
          <Command><PointerIcon />Выделить</Command>
        </CommandList>
        <GroupFooter $align="left">
          <span>Редактирование</span>
        </GroupFooter>
      </Group>
    </Ribbon>

    <Workspace>
      <QuickAccess>
        <QuickButton><PictureIcon /></QuickButton>
        <QuickButton $active><DocumentIcon /></QuickButton>
        <QuickButton><FolderIcon /></QuickButton>
        <QuickButton><PageSizeIcon /></QuickButton>
        <QuickButton><FolderIcon /></QuickButton>
        <QuickButton><CustomizeIcon /></QuickButton>
      </QuickAccess>
      <Ruler>
        {[8, 10, 12, 14, 16].map((mark) => (
          <span key={mark}>{mark}</span>
        ))}
        <RulerMarker />
      </Ruler>
      <Pages>
        {sheets.map((sheet, index) => (
          <Sheet key={index}>
            {sheet}
            {index > 1 && <PageNumber>{index + 1}</PageNumber>}
          </Sheet>
        ))}
      </Pages>
    </Workspace>

    <StatusBar>
      Число слов: 2313
      <Language>
        <ProofIcon />
        русский
      </Language>
      <Spacer />
      <ViewButton><ReadIcon /></ViewButton>
      <ViewButton $active><PrintIcon /></ViewButton>
      <ViewButton><WebIcon /></ViewButton>
      <Svg w={12} h={2}>
        <path d="M5 1h7" stroke="#555" />
      </Svg>
      <ZoomSlider type="range" aria-label="Масштаб" min="0" max="100" defaultValue="7" />
    </StatusBar>

    <Taskbar>
      <SearchBox>
        <input aria-label="Поиск" defaultValue="айн-иг..." />
        <button type="button">Найти</button>
      </SearchBox>
      <Gadget aria-label="Панель управления"><ControlPanelIcon /></Gadget>
      <TaskList>
        <TaskButton aria-label="Яндекс"><YandexIcon /></TaskButton>
        <TaskButton aria-label="Photoshop"><PhotoshopIcon /></TaskButton>
        <TaskButton aria-label="1С"><OneCIcon /></TaskButton>
        <TaskButton aria-label="Проводник"><ExplorerIcon /></TaskButton>
        <TaskButton aria-label="Word" $active><WordIcon /></TaskButton>
      </TaskList>
      <Spacer />
      <Desktop>Рабочий стол</Desktop>
      <Tray>
        <TrayLanguage>
          <MoreIcon />
          RU
        </TrayLanguage>
        <TrayIcons>
          <YandexIcon size={13} />
          <AntivirusIcon />
          <SignalIcon />
          <VolumeIcon />
          <FlagIcon />
        </TrayIcons>
      </Tray>
    </Taskbar>
  </Screen>
);

export default App;
